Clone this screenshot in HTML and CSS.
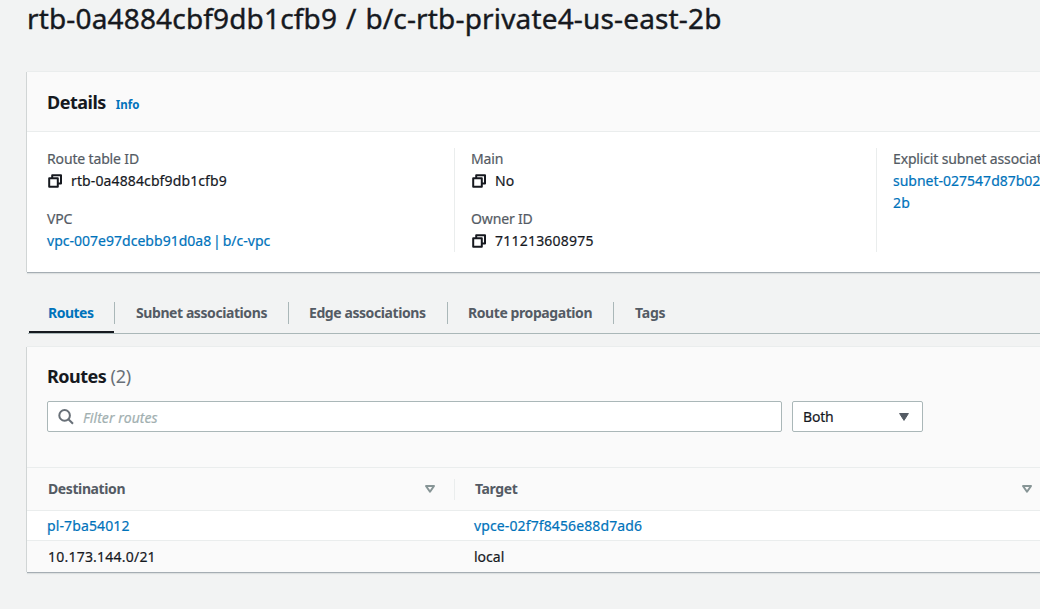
FILE: index.html
```html
<!DOCTYPE html>
<html lang="en">
<head>
<meta charset="utf-8">
<title>Route table details</title>
<link rel="stylesheet" href="styles.css">
</head>
<body>
<svg class="defs" width="0" height="0" aria-hidden="true">
  <symbol id="copy" viewBox="0 0 16 16"><path d="M2.2 5.2h8.6v8.6H2.2zM5.2 5V2.2h8.8v8.3h-3.2" fill="none" stroke="#16191f" stroke-width="2" stroke-linejoin="round"/></symbol>
  <symbol id="sort" viewBox="0 0 12 10"><path d="M2 2h8L6 7.8z" fill="none" stroke="#879596" stroke-width="2" stroke-linejoin="round"/></symbol>
</svg>
<main class="page">
  <h1 class="page-title">rtb-0a4884cbf9db1cfb9 / b/c-rtb-private4-us-east-2b</h1>

  <section class="panel details">
    <header class="details-header"><h2 class="heading">Details</h2><a class="info">Info</a></header>
    <div class="columns">
      <div class="column">
        <div class="label">Route table ID</div>
        <div class="value"><svg class="copy"><use href="#copy"/></svg><span>rtb-0a4884cbf9db1cfb9</span></div>
        <div class="label second">VPC</div>
        <div class="value"><a class="link vpc-link">vpc-007e97dcebb91d0a8 | b/c-vpc</a></div>
      </div>
      <div class="column">
        <div class="label">Main</div>
        <div class="value"><svg class="copy"><use href="#copy"/></svg><span>No</span></div>
        <div class="label second">Owner ID</div>
        <div class="value"><svg class="copy"><use href="#copy"/></svg><span class="number">711213608975</span></div>
      </div>
      <div class="column">
        <div class="label">Explicit subnet associations</div>
        <div class="value"><a class="link subnet-link">subnet-027547d87b02</a></div>
        <div class="value"><a class="link">2b</a></div>
      </div>
    </div>
  </section>

  <nav class="tabs">
    <a class="tab active"><span>Routes</span></a>
    <a class="tab tab-subnet"><span>Subnet associations</span></a>
    <a class="tab tab-edge"><span>Edge associations</span></a>
    <a class="tab tab-prop"><span>Route propagation</span></a>
    <a class="tab tab-tags"><span>Tags</span></a>
  </nav>

  <section class="panel routes">
    <header class="routes-header">
      <h2 class="heading">Routes <span class="count">(2)</span></h2>
      <div class="filters">
        <div class="search">
          <svg class="magnifier" viewBox="0 0 16 16"><circle cx="6.6" cy="6.4" r="5.3" fill="none" stroke="#687078" stroke-width="2"/><path d="M10.4 10.2l4.6 4.6" stroke="#687078" stroke-width="2"/></svg>
          <span class="placeholder">Filter routes</span>
        </div>
        <div class="select"><span>Both</span><svg class="caret" viewBox="0 0 12 10"><path d="M1.6 1.5h8.8L6 8.4z" fill="#545b64" stroke="#545b64" stroke-width="1" stroke-linejoin="round"/></svg></div>
      </div>
    </header>
    <div class="table">
      <div class="row head">
        <div class="cell"><span>Destination</span><svg class="sort"><use href="#sort"/></svg></div>
        <div class="cell"><span>Target</span><svg class="sort"><use href="#sort"/></svg></div>
      </div>
      <div class="row"><div class="cell"><a class="link">pl-7ba54012</a></div><div class="cell"><a class="link">vpce-02f7f8456e88d7ad6</a></div></div>
      <div class="row striped"><div class="cell"><span class="number">10.173.144.0/21</span></div><div class="cell"><span>local</span></div></div>
    </div>
  </section>
</main>
</body>
</html>
```
FILE: styles.css
```css
* { box-sizing: border-box; }
html, body { margin: 0; overflow: hidden; }
body {
  width: 1040px;
  height: 609px;
  background: #f2f3f3;
  color: #16191f;
  font: 14px/22px "Noto Sans", "Open Sans", sans-serif;
  -webkit-text-stroke: 0.2px currentColor;
}
.defs { display: block; height: 0; }
.page { padding-left: 27px; }
.page-title {
  height: 72px;
  margin: 0;
  font-size: 28px;
  font-weight: 400;
  line-height: 36px;
  letter-spacing: 0.16px;
  word-spacing: 1.4px;
  white-space: nowrap;
  -webkit-text-stroke-width: 0.4px;
}
.panel {
  width: 1060px;
  background: #fff;
  box-shadow: -1px 0 0 #d1d5d5, 0 -1px 0 #eaeded, 0 1px 0 #a5adb3, 0 2px 1px #dde0e0;
  white-space: nowrap;
}
.heading {
  margin: 0;
  font-size: 18px;
  font-weight: 700;
  line-height: 22px;
  letter-spacing: -0.5px;
  -webkit-text-stroke-width: 0;
}
.details { height: 200px; }
.details-header {
  display: flex;
  align-items: center;
  gap: 10px;
  height: 60px;
  padding-left: 20px;
  background: #fafafa;
  border-bottom: 1px solid #eaeded;
}
.info {
  padding-top: 6px;
  color: #0073bb;
  font-size: 11.5px;
  font-weight: 700;
  line-height: 18px;
  -webkit-text-stroke-width: 0;
}
.columns { display: flex; padding-top: 16px; }
.column {
  width: 422px;
  height: 104px;
  padding-left: 16px;
  border-left: 1px solid #eaeded;
}
.column:first-child { width: 427px; padding-left: 20px; border-left: 0; }
.column:last-child { width: 200px; }
.label { height: 22px; color: #545b64; line-height: 21px; letter-spacing: -0.15px; }
.label.second { margin-top: 16px; line-height: 22px; }
.value { display: flex; align-items: center; height: 22px; letter-spacing: 0.12px; }
.copy { width: 16px; height: 16px; margin-right: 8px; }
.link { color: #0073bb; letter-spacing: 0.12px; }
.vpc-link { letter-spacing: 0.02px; word-spacing: -1.8px; }
.subnet-link { letter-spacing: 0; }
.number { letter-spacing: 0.22px; }

.tabs {
  display: flex;
  height: 32px;
  margin: 30px 0 0 1px;
  border-bottom: 1px solid #aab7b8;
  color: #545b64;
  font-weight: 700;
  letter-spacing: -0.42px;
  white-space: nowrap;
  -webkit-text-stroke-width: 0;
}
.tab { display: flex; height: 22px; padding-left: 21px; line-height: 22px; border-right: 1px solid #aab7b8; }
.tab.active {
  width: 87px;
  height: 31px;
  padding-left: 20px;
  border-right: 0;
  color: #0073bb;
  letter-spacing: -0.5px;
  background: linear-gradient(#16191f, #16191f) 1px 29px / 85px 2px no-repeat, linear-gradient(#aab7b8, #aab7b8) 86px 0 / 1px 22px no-repeat;
}
.tab-subnet { width: 174px; }
.tab-edge { width: 159px; padding-left: 20px; }
.tab-prop { width: 166px; padding-left: 20px; }
.tab-tags { border-right: 0; letter-spacing: -0.2px; }

.routes { margin-top: 13px; height: 225px; }
.routes-header { height: 121px; padding: 18px 0 0 20px; background: #fafafa; border-bottom: 1px solid #eaeded; }
.count { color: #687078; font-weight: 400; letter-spacing: -0.3px; }
.filters { display: flex; gap: 10px; margin-top: 14px; }
.search, .select { display: flex; align-items: center; height: 31px; background: #fff; border: 1px solid #aab7b8; border-radius: 2px; }
.search { width: 735px; padding-left: 10px; }
.magnifier { width: 16px; height: 16px; }
.placeholder { margin-left: 9px; padding-top: 2px; color: #a2b0b1; font-style: italic; letter-spacing: 0.08px; }
.select { width: 131px; padding: 0 12px 0 10px; justify-content: space-between; letter-spacing: -0.2px; }
.caret { width: 12px; height: 10px; }
.row { display: flex; height: 30px; background: #fff; border-bottom: 1px solid #eaeded; }
.row.head { height: 43px; background: #fafafa; color: #545b64; font-weight: 700; letter-spacing: -0.4px; -webkit-text-stroke-width: 0; }
.row.striped { height: 31px; background: #fafafa; border-bottom: 0; }
.cell { display: flex; align-items: center; padding-left: 20px; width: 427px; }
.cell:first-child .number { padding-left: 1px; }
.cell:last-child { width: 600px; }
.head .cell { justify-content: space-between; padding: 0 19px 0 21px; width: 428px; background: linear-gradient(#eaeded, #eaeded) 100% 11px / 1px 21px no-repeat; }
.head .cell:last-child { width: 597px; padding-left: 20px; background: none; }
.sort { width: 12px; height: 10px; }
```
